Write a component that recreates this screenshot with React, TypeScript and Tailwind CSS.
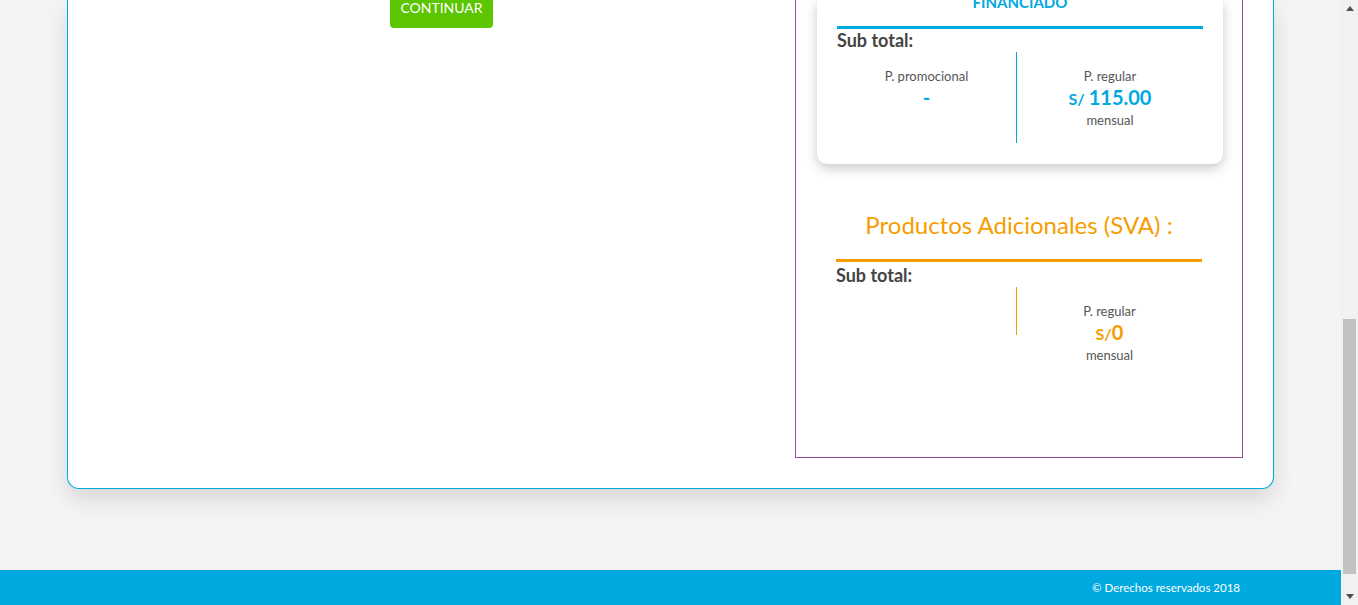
export default function App() {
  return (
    <div
      className="flex h-[605px] w-[1358px] overflow-hidden bg-[#f4f4f4]"
      style={{ fontFamily: "Lato, 'Liberation Sans', sans-serif" }}
    >
      <div className="flex w-[1341px] flex-col">
        <div className="ml-[67px] flex h-[489px] w-[1207px] rounded-b-[12px] border border-t-0 border-[#00a9e0] bg-white shadow-[0_10px_22px_rgba(0,0,0,0.12)]">
          <div className="w-[727px]">
            <div className="-mt-[14px] ml-[322px] flex h-[42px] w-[103px] items-center justify-center rounded-[4px] bg-[#5bc500] text-[14px] text-white">
              CONTINUAR
            </div>
          </div>
          <div className="flex h-[458px] w-[448px] flex-col border-x border-b border-[#954b97]">
            <div className="ml-[21px] flex w-[406px] flex-col rounded-b-[10px] bg-white px-5 pb-[21px] shadow-[0_4px_12px_rgba(0,0,0,0.22)]">
              <div className="flex h-[26px] flex-col">
                <p className="-mt-[5px] text-center text-[15px] font-bold leading-[15px] text-[#00a9e0]">
                  FINANCIADO
                </p>
              </div>
              <div className="h-[3px] bg-[#00a9e0]" />
              <p className="text-[18px] font-bold leading-[23px] text-[#444]">Sub total:</p>
              <div className="flex h-[91px]">
                <div className="flex w-[180px] flex-col items-center border-r border-[#00a9e0] pt-[14px]">
                  <span className="text-[13px] leading-[20px] text-[#555]">P. promocional</span>
                  <span className="text-[20px] font-bold leading-[22px] text-[#00a9e0]">-</span>
                </div>
                <div className="flex flex-1 flex-col items-center pt-[14px]">
                  <span className="text-[13px] leading-[20px] text-[#555]">P. regular</span>
                  <span className="font-bold leading-[22px] text-[#00a9e0]">
                    <span className="text-[16px]">S/</span>{" "}
                    <span className="text-[20px]">115.00</span>
                  </span>
                  <span className="text-[13px] leading-[20px] text-[#555]">mensual</span>
                </div>
              </div>
            </div>
            <p className="mt-[45px] text-center text-[24px] leading-[32px] text-[#f59d00]">
              Productos Adicionales (SVA) :
            </p>
            <div className="mx-[40px] mt-[18px] h-[3px] bg-[#f59d00]" />
            <p className="ml-[40px] mt-[2px] text-[18px] font-bold leading-[23px] text-[#444]">Sub total:</p>
            <div className="mx-[40px] flex">
              <div className="h-[48px] w-[181px] border-r border-[#f59d00]" />
              <div className="flex flex-1 flex-col items-center pt-[14px]">
                <span className="text-[13px] leading-[20px] text-[#555]">P. regular</span>
                <span className="font-bold leading-[22px] text-[#f59d00]">
                  <span className="text-[16px]">S/</span>
                  <span className="text-[20px]">0</span>
                </span>
                <span className="text-[13px] leading-[20px] text-[#555]">mensual</span>
              </div>
            </div>
          </div>
        </div>
        <div className="mt-[81px] flex h-[35px] items-center justify-end bg-[#00a9e0] pr-[101px] text-[11.5px] text-white">
          © Derechos reservados 2018
        </div>
      </div>
      <div className="flex h-[605px] w-[17px] flex-col bg-[#f1f1f1]">
        <div className="flex h-[17px] items-center justify-center">
          <svg width="8" height="5" viewBox="0 0 8 5">
            <path d="M0 5 L4 0 L8 5 Z" fill="#505050" />
          </svg>
        </div>
        <div className="flex-1">
          <div className="ml-[2px] mt-[302px] h-[255px] w-[13px] bg-[#c1c1c1]" />
        </div>
        <div className="flex h-[17px] items-center justify-center">
          <svg width="8" height="5" viewBox="0 0 8 5">
            <path d="M0 0 L8 0 L4 5 Z" fill="#505050" />
          </svg>
        </div>
      </div>
    </div>
  );
}
